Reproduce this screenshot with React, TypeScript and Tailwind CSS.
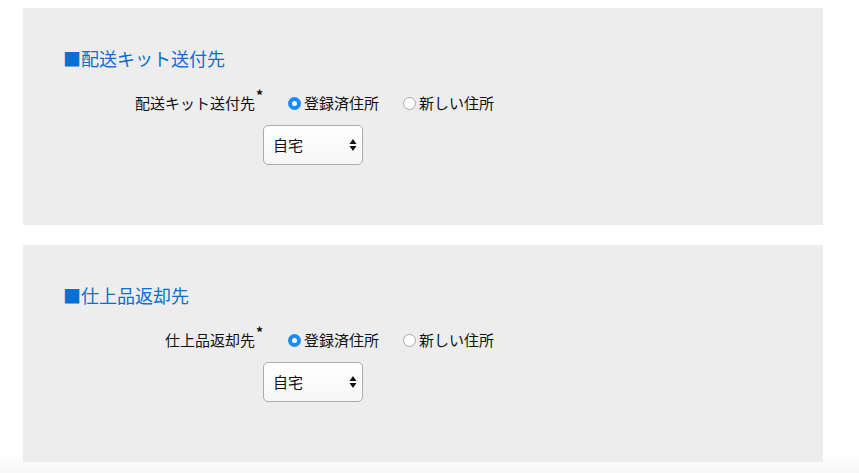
import React from "react";

const font = { fontFamily: '"Noto Sans CJK JP", "Noto Sans", sans-serif' };

function Radio({ checked, label }: { checked: boolean; label: string }) {
  return (
    <label className="flex items-center">
      {checked ? (
        <span className="flex h-[13px] w-[13px] items-center justify-center rounded-full bg-[#1a8bfa]">
          <span className="h-[5px] w-[5px] rounded-full bg-white" />
        </span>
      ) : (
        <span className="h-[13px] w-[13px] rounded-full border border-[#a9a9a9] bg-white" />
      )}
      <span className="ml-[3px] text-[15px] leading-[24px] text-[#111]">{label}</span>
    </label>
  );
}

function Select() {
  return (
    <div className="flex h-[40px] w-[100px] items-center justify-between rounded-[5px] border border-[#ababab] bg-[linear-gradient(to_bottom,#ffffff,#f6f6f6)] pl-[9px] pr-[5px]">
      <span className="text-[15px] leading-[20px] text-[#111]">自宅</span>
      <svg width="8" height="14" viewBox="0 0 8 14">
        <path d="M4 1 L7.5 6 L0.5 6 Z" fill="#111" />
        <path d="M4 13 L7.5 8 L0.5 8 Z" fill="#111" />
      </svg>
    </div>
  );
}

function Panel({ title, label }: { title: string; label: string }) {
  return (
    <section className="h-[217px] w-[800px] bg-[#ededed] pt-[38px]">
      <h2 className="pl-[40px] text-[18px] leading-[24px] text-[#0a6fd0]">
        <span className="text-[#0a6fd0]">■</span>
        {title}
      </h2>
      <div className="mt-[21px] flex items-center">
        <div className="flex w-[240px] justify-end">
          <span className="text-[15px] leading-[24px] text-[#111]">{label}</span>
          <span className="-mt-[5px] ml-[1px] w-[7px] text-[14px] font-bold leading-[18px] text-[#111]">*</span>
        </div>
        <div className="ml-[25px] flex items-center gap-[24px]">
          <Radio checked label="登録済住所" />
          <Radio checked={false} label="新しい住所" />
        </div>
      </div>
      <div className="ml-[240px] mt-[10px]">
        <Select />
      </div>
    </section>
  );
}

export default function App() {
  return (
    <div
      style={font}
      className="h-[473px] w-[859px] overflow-hidden bg-[linear-gradient(to_bottom,#ffffff_452px,#f7f7f7_473px)] pl-[23px] pt-[8px]"
    >
      <div className="flex flex-col gap-[20px]">
        <Panel title="配送キット送付先" label="配送キット送付先" />
        <Panel title="仕上品返却先" label="仕上品返却先" />
      </div>
    </div>
  );
}
